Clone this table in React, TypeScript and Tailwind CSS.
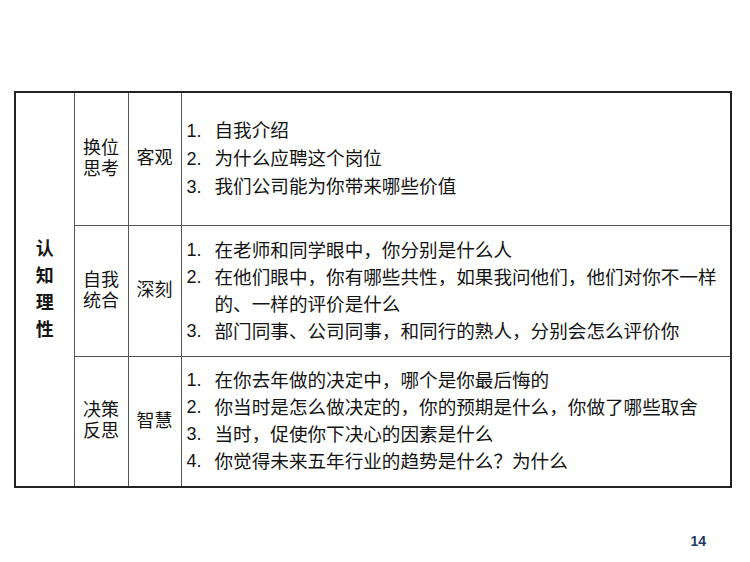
import React from "react";

const font = { fontFamily: '"Liberation Sans", "Noto Sans CJK SC", sans-serif' };

function List({ items, lh }: { items: string[][]; lh: string }) {
  return (
    <div className={`flex flex-col text-[18.6px] ${lh}`}>
      {items.map((it, i) => (
        <div key={i} className="flex">
          <span className="w-[28px] shrink-0 text-[18px]">{i + 1}.</span>
          <span>
            {it.map((l, j) => (
              <div key={j}>{l}</div>
            ))}
          </span>
        </div>
      ))}
    </div>
  );
}

export default function App() {
  const cell = "border border-[#555] align-middle";
  return (
    <div className="w-[750px] h-[562px] bg-white relative text-[#151515]" style={font}>
      <div className="pt-[91px] pl-[14px]">
        <table className="border-collapse w-[718px] text-[18px] border-2 border-[#222]">
          <tbody>
            <tr className="h-[133px]">
              <td rowSpan={3} className={`${cell} w-[59px] text-center font-bold leading-[27px]`}>
                <div>认</div>
                <div>知</div>
                <div>理</div>
                <div>性</div>
              </td>
              <td className={`${cell} w-[54px] text-center leading-[21px]`}>
                <div>换位</div>
                <div>思考</div>
              </td>
              <td className={`${cell} w-[53px] text-center`}>客观</td>
              <td className={`${cell} pl-[5px] pr-2`}>
                <List
                  lh="leading-[28px]"
                  items={[["自我介绍"], ["为什么应聘这个岗位"], ["我们公司能为你带来哪些价值"]]}
                />
              </td>
            </tr>
            <tr className="h-[131px]">
              <td className={`${cell} text-center leading-[21px]`}>
                <div>自我</div>
                <div>统合</div>
              </td>
              <td className={`${cell} text-center`}>深刻</td>
              <td className={`${cell} pl-[5px] pr-2`}>
                <List
                  lh="leading-[27px]"
                  items={[
                    ["在老师和同学眼中，你分别是什么人"],
                    ["在他们眼中，你有哪些共性，如果我问他们，他们对你不一样", "的、一样的评价是什么"],
                    ["部门同事、公司同事，和同行的熟人，分别会怎么评价你"],
                  ]}
                />
              </td>
            </tr>
            <tr className="h-[131px]">
              <td className={`${cell} text-center leading-[21px]`}>
                <div>决策</div>
                <div>反思</div>
              </td>
              <td className={`${cell} text-center`}>智慧</td>
              <td className={`${cell} pl-[5px] pr-2`}>
                <List
                  lh="leading-[27px]"
                  items={[
                    ["在你去年做的决定中，哪个是你最后悔的"],
                    ["你当时是怎么做决定的，你的预期是什么，你做了哪些取舍"],
                    ["当时，促使你下决心的因素是什么"],
                    ["你觉得未来五年行业的趋势是什么？为什么"],
                  ]}
                />
              </td>
            </tr>
          </tbody>
        </table>
      </div>
      <div className="flex justify-end pr-[44px] pt-[43px]">
        <span className="text-[14px] font-bold text-[#1f3864]">14</span>
      </div>
    </div>
  );
}
